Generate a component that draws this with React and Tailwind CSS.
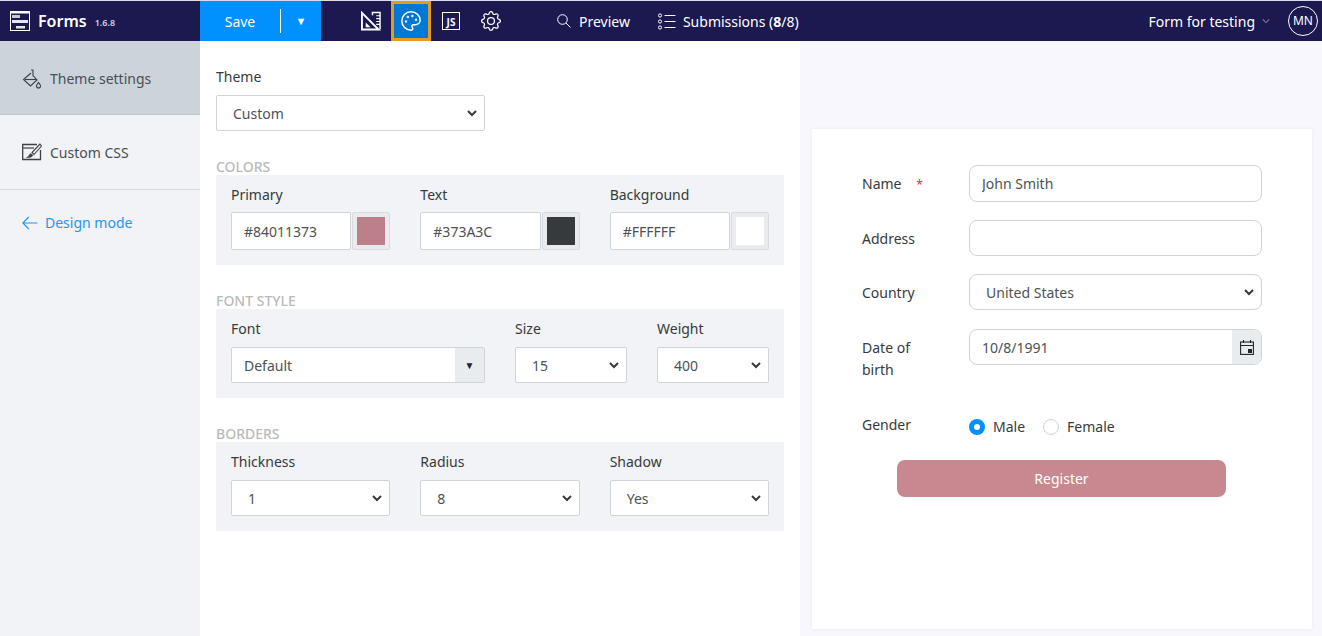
import React from "react";
import { BsChevronDown, BsGear } from "react-icons/bs";
import { Palette } from "lucide-react";

const LogoIcon = () => (
  <svg width="20" height="20" viewBox="0 0 20 20" fill="none">
    <rect x="0.5" y="0.5" width="19" height="19" stroke="#fff" />
    <rect x="1" y="1" width="18" height="1.5" fill="#fff" />
    <rect x="2" y="4" width="8" height="3" fill="#c8c8dc" />
    <rect x="2" y="9" width="16" height="3" fill="#e6e6f0" />
    <rect x="6" y="15" width="9" height="2.5" fill="#e6e6f0" />
  </svg>
);

const SetSquareIcon = () => (
  <svg width="21" height="20" viewBox="0 0 21 20" fill="none" stroke="#fff">
    <path d="M1 1.5 L18.5 19 H1 Z" strokeWidth="2" />
    <path d="M5 11.5 L10 16.5 H5 Z" fill="#fff" stroke="none" />
    <path d="M12 4 V1 H20 V19" strokeWidth="1.5" />
    <path d="M16 4.5 H20 M16 7.5 H20 M16 10.5 H20 M16 13.5 H20" strokeWidth="1.2" />
  </svg>
);

const SearchIcon = () => (
  <svg width="14" height="14" viewBox="0 0 14 14" fill="none" stroke="#fff" strokeWidth="1">
    <circle cx="5.5" cy="5.5" r="4.8" />
    <path d="M9 9 L13.5 13.5" />
  </svg>
);

const ListIcon = () => (
  <svg width="18" height="17" viewBox="0 0 18 17" fill="none" stroke="#fff" strokeWidth="1">
    <circle cx="2" cy="2.5" r="1.6" />
    <circle cx="2" cy="8.5" r="1.6" />
    <circle cx="2" cy="14.5" r="1.6" />
    <path d="M6.5 2.5 H17.5 M6.5 8.5 H17.5 M6.5 14.5 H17.5" />
  </svg>
);

const BucketIcon = () => (
  <svg width="20" height="20" viewBox="0 0 20 20" fill="none" stroke="#3d4146" strokeWidth="1.1">
    <path d="M9 1 H11 V6.5 L15 11 L8.5 17 L1.5 10.5 L9 4" />
    <path d="M3 10.5 H14" />
    <path d="M16.5 13.5 C17.8 15.3 18.5 16 18.5 17 A2 2 0 0 1 14.5 17 C14.5 16 15.2 15.3 16.5 13.5 Z" />
  </svg>
);

const EditBoxIcon = () => (
  <svg width="20" height="18" viewBox="0 0 20 18" fill="none" stroke="#3d4146">
    <path d="M15 1.5 H0.7 V16.5 H18.5 V7" strokeWidth="1.3" />
    <path d="M1 5 H12" strokeWidth="1.2" />
    <path d="M18 1 L10 9.5 L12 11.5 L19.5 3 Z" strokeWidth="1.1" />
    <path d="M4.5 14.5 C7 14 7 11 9 10.5 L11 12.5 C10 14 7.5 15 4.5 14.5 Z" fill="#3d4146" strokeWidth="0.5" />
  </svg>
);

const ArrowIcon = () => (
  <svg width="16" height="14" viewBox="0 0 16 14" fill="none" stroke="#2196f3" strokeWidth="1.1">
    <path d="M0.8 7 H15.5 M6.8 1 L0.8 7 L6.8 13" />
  </svg>
);

const CalendarIcon = () => (
  <svg width="14" height="15" viewBox="0 0 14 15" fill="none" stroke="#212529" strokeWidth="1.1">
    <rect x="0.6" y="2" width="12.8" height="12.4" />
    <path d="M0.6 5.5 H13.4 M3.5 0 V3 M10.5 0 V3" />
    <rect x="8" y="9" width="4" height="4" fill="#212529" stroke="none" />
  </svg>
);

const SelectChevron = () => (
  <svg
    width="10"
    height="7"
    viewBox="0 0 10 7"
    fill="none"
    stroke="#373a3c"
    strokeWidth="2"
    className="pointer-events-none absolute right-2 top-[15px]"
  >
    <path d="M1 1 L5 5 L9 1" />
  </svg>
);

const inputCls =
  "h-[38px] min-w-0 flex-1 rounded-[2px] border border-[#ced4da] bg-white px-3 text-[14px] text-[#4d5156] outline-none";
const selectCls =
  "h-9 w-full appearance-none rounded-[2px] border border-[#ced4da] bg-white px-4 text-[14px] text-[#4d5156] outline-none";
const formInputCls =
  "h-9 w-full rounded-lg border border-[#ced4da] bg-white px-3 text-[14px] text-[#4d5156] outline-none";
const labelCls = "block h-[21px] text-[14px] leading-[21px] text-[#373a3c]";

const ColorField = ({ label, value, swatch }) => (
  <div>
    <label className={`${labelCls} mb-[7px]`}>{label}</label>
    <div className="flex gap-px">
      <input className={inputCls} defaultValue={value} readOnly />
      <div className="flex h-[38px] w-[38px] items-center justify-center rounded-[2px] border border-[#d8dbe0] bg-[#e9ebef]">
        <div className="h-7 w-7" style={{ backgroundColor: swatch }} />
      </div>
    </div>
  </div>
);

const Select = ({ value }) => (
  <div className="relative">
    <select className={selectCls} defaultValue={value}>
      <option>{value}</option>
    </select>
    <SelectChevron />
  </div>
);

const SelectField = ({ label, value }) => (
  <div>
    <label className={`${labelCls} mb-2`}>{label}</label>
    <Select value={value} />
  </div>
);

const SectionTitle = ({ children }) => (
  <div className="h-[18px] text-[14px] font-medium leading-[20px] text-[#bababa]">{children}</div>
);

const FormRow = ({ label, children, className = "" }) => (
  <div className={`flex ${className}`}>
    <label className="w-[107px] shrink-0 pr-6 pt-2 text-[14px] leading-[22px] text-[#373a3c]">{label}</label>
    <div className="w-[293px]">{children}</div>
  </div>
);

export default function App() {
  return (
    <div className="flex h-[636px] w-[1322px] flex-col overflow-hidden bg-white font-['Noto_Sans',sans-serif] text-[14px]">
      {/* top bar */}
      <header className="flex h-[41px] shrink-0 items-center border-t border-[#dcdcec] bg-[#1b1950] text-white">
        <div className="flex w-[200px] items-center pl-[10px]">
          <LogoIcon />
          <span className="ml-2 text-[16px] font-semibold">Forms</span>
          <span className="ml-2 mt-1 text-[9px] font-semibold text-[#d5d5e0]">1.6.8</span>
        </div>
        <div className="flex h-full w-[121px] items-center bg-[#0091ff]">
          <span className="w-20 text-center text-[14px]">Save</span>
          <span className="h-6 w-px bg-white" />
          <span className="flex-1 text-center text-[11px]">▼</span>
        </div>
        <div className="ml-10 flex w-[20px] justify-center">
          <SetSquareIcon />
        </div>
        <div className="ml-[10px] flex h-full w-10 items-center justify-center border-[3px] border-[#e69a1f] bg-[#0078d4]">
          <Palette size={22} strokeWidth={1.6} />
        </div>
        <div className="ml-[11px] flex h-[18px] w-[18px] items-end justify-center border-[1.5px] border-white text-[10px] font-bold leading-[13px]">
          JS
        </div>
        <BsGear size={20} className="ml-[21px]" />
        <div className="ml-[56px]">
          <SearchIcon />
        </div>
        <span className="ml-2 text-[14px]">Preview</span>
        <div className="ml-[28px]">
          <ListIcon />
        </div>
        <span className="ml-[7px] text-[14px]">
          Submissions (<b className="font-bold">8</b>/8)
        </span>
        <span className="ml-auto text-[14px]">Form for testing</span>
        <BsChevronDown size={8} className="ml-[7px] text-[#e0e0ea]" />
        <div className="ml-[18px] mr-1 flex h-[30px] w-[30px] items-center justify-center rounded-full border border-white text-[12px]">
          MN
        </div>
      </header>

      <div className="flex min-h-0 flex-1">
        {/* sidebar */}
        <aside className="w-[200px] shrink-0 bg-[#f1f3f6]">
          <div className="flex h-[74px] items-center border-b border-[#bfc7cf] bg-[#ccd3da] pl-[22px] pt-[2px] text-[14px] text-[#4a4e53]">
            <BucketIcon />
            <span className="ml-2">Theme settings</span>
          </div>
          <div className="flex h-[75px] items-center border-b border-[#d5d8dc] pl-[22px] text-[14px] text-[#4a4e53]">
            <EditBoxIcon />
            <span className="ml-2">Custom CSS</span>
          </div>
          <div className="flex items-center pl-[22px] pt-[22px] text-[14px] text-[#2196f3]">
            <ArrowIcon />
            <span className="ml-[7px]">Design mode</span>
          </div>
        </aside>

        {/* settings */}
        <main className="w-[600px] shrink-0 bg-white px-4 pt-[25px]">
          <label className={labelCls}>Theme</label>
          <div className="mt-2 w-[269px]">
            <Select value="Custom" />
          </div>

          <div className="mt-[26px]">
            <SectionTitle>COLORS</SectionTitle>
            <div className="grid grid-cols-3 gap-[30px] bg-[#f1f3f6] px-[15px] pb-[15px] pt-[9px]">
              <ColorField label="Primary" value="#84011373" swatch="#bd808b" />
              <ColorField label="Text" value="#373A3C" swatch="#373a3c" />
              <ColorField label="Background" value="#FFFFFF" swatch="#ffffff" />
            </div>
          </div>

          <div className="mt-[26px]">
            <SectionTitle>FONT STYLE</SectionTitle>
            <div className="grid grid-cols-[254px_112px_112px] gap-[30px] bg-[#f1f3f6] px-[15px] pb-[15px] pt-[9px]">
              <div>
                <label className={`${labelCls} mb-2`}>Font</label>
                <div className="flex h-9 items-stretch rounded-[2px] border border-[#ced4da] bg-white">
                  <input className="min-w-0 flex-1 px-3 text-[14px] text-[#4d5156] outline-none" defaultValue="Default" readOnly />
                  <span className="flex w-[29px] items-center justify-center bg-[#e9ecef] text-[10px] text-[#212529]">▼</span>
                </div>
              </div>
              <SelectField label="Size" value="15" />
              <SelectField label="Weight" value="400" />
            </div>
          </div>

          <div className="mt-[26px]">
            <SectionTitle>BORDERS</SectionTitle>
            <div className="grid grid-cols-3 gap-[30px] bg-[#f1f3f6] px-[15px] pb-[15px] pt-[9px]">
              <SelectField label="Thickness" value="1" />
              <SelectField label="Radius" value="8" />
              <SelectField label="Shadow" value="Yes" />
            </div>
          </div>
        </main>

        {/* form preview */}
        <section className="flex-1 bg-[#f7f7fd] pl-3 pt-[88px]">
          <div className="h-[500px] w-[500px] bg-white pl-[50px] pt-9 shadow-[0_0_4px_rgba(0,0,0,0.06)]">
            <FormRow
              label={
                <>
                  Name <span className="ml-[11px] text-[12px] text-[#dc3545]">*</span>
                </>
              }
            >
              <input className={`${formInputCls} !h-[37px]`} defaultValue="John Smith" readOnly />
            </FormRow>
            <FormRow label="Address" className="mt-[18px] h-9">
              <input className={formInputCls} readOnly />
            </FormRow>
            <FormRow label="Country" className="mt-[18px] h-9">
              <div className="relative">
                <select className={`${formInputCls} appearance-none !px-4`} defaultValue="United States">
                  <option>United States</option>
                </select>
                <SelectChevron />
              </div>
            </FormRow>
            <FormRow label="Date of birth" className="mt-[19px]">
              <div className="flex h-9 overflow-hidden rounded-lg border border-[#ced4da]">
                <input className="min-w-0 flex-1 px-3 text-[14px] text-[#4d5156] outline-none" defaultValue="10/8/1991" readOnly />
                <span className="flex w-[29px] items-center justify-center bg-[#e9ecef]">
                  <CalendarIcon />
                </span>
              </div>
            </FormRow>
            <div className="mt-[33px] flex">
              <label className="w-[107px] shrink-0 text-[14px] leading-[22px] text-[#373a3c]">Gender</label>
              <div className="flex items-center pt-[2px] text-[14px] leading-[22px] text-[#373a3c]">
                <span className="h-4 w-4 rounded-full border-[5px] border-[#0091ff] bg-white" />
                <span className="ml-2">Male</span>
                <span className="ml-[18px] h-4 w-4 rounded-full border border-[#ced4da] bg-white" />
                <span className="ml-2">Female</span>
              </div>
            </div>
            <button className="ml-[35px] mt-[22px] h-[37px] w-[329px] rounded-lg bg-[#c7898f] text-[14px] text-white">
              Register
            </button>
          </div>
        </section>
      </div>
    </div>
  );
}
